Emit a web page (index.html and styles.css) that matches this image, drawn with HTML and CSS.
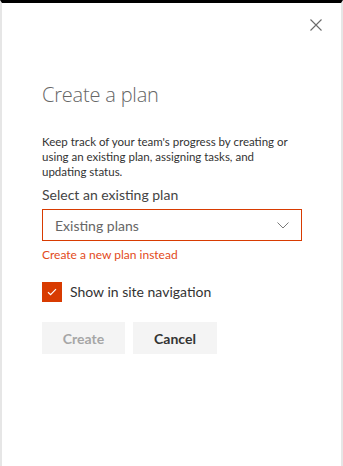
FILE: index.html
```html
<!DOCTYPE html>
<html>
<head>
<meta charset="utf-8">
<link rel="stylesheet" href="styles.css">
</head>
<body>
<div class="panel">
  <div class="topbar">
    <button class="close" aria-label="Close">
      <svg width="12" height="12" viewBox="0 0 12 12"><path d="M0.5 0.5 L11.5 11.5 M11.5 0.5 L0.5 11.5" stroke="#6b6b6b" stroke-width="1.1" fill="none"/></svg>
    </button>
  </div>
  <div class="content">
    <h1 class="title">Create a plan</h1>
    <p class="desc">Keep track of your team's progress by creating or using an existing plan, assigning tasks, and updating status.</p>
    <div class="label">Select an existing plan</div>
    <div class="dropdown">
      <span class="dd-text">Existing plans</span>
      <svg class="chev" width="12" height="7" viewBox="0 0 12 7"><path d="M0.5 0.5 L6 6 L11.5 0.5" stroke="#7a7a7a" stroke-width="1" fill="none"/></svg>
    </div>
    <a class="link">Create a new plan instead</a>
    <div class="check-row">
      <span class="checkbox">
        <svg width="10" height="8" viewBox="0 0 10 8"><path d="M1 4.2 L3.6 6.6 L9 1.2" stroke="#fff" stroke-width="1.2" fill="none"/></svg>
      </span>
      <span class="check-label">Show in site navigation</span>
    </div>
    <div class="buttons">
      <button class="btn disabled">Create</button>
      <button class="btn">Cancel</button>
    </div>
  </div>
</div>
</body>
</html>
```
FILE: styles.css
```css
html, body {
  margin: 0;
  padding: 0;
  background: #fff;
}
body {
  font-family: Lato, "Open Sans", sans-serif;
  color: #333;
}
.panel {
  box-sizing: border-box;
  height: 466px;
  border-top: 3px solid #000;
  border-left: 2px solid #e6e6e6;
  border-right: 2px solid #e6e6e6;
  background: #fff;
}
.topbar {
  display: flex;
  justify-content: flex-end;
  padding: 16px 19px 0 0;
}
.close {
  width: 12px;
  height: 12px;
  padding: 0;
  border: 0;
  background: none;
  display: flex;
}
.content {
  padding: 0 0 0 40px;
}
.title {
  margin: 50px 0 0 0;
  font-family: "Open Sans", sans-serif;
  font-size: 20px;
  font-weight: 300;
  line-height: 28px;
  color: #666;
  letter-spacing: -0.2px;
}
.desc {
  margin: 25px 0 0 0;
  width: 252px;
  font-size: 11.5px;
  line-height: 15px;
  color: #333;
}
.label {
  margin-top: 6px;
  font-size: 14px;
  line-height: 20px;
  color: #444;
}
.dropdown {
  box-sizing: border-box;
  margin-top: 4px;
  width: 260px;
  height: 32px;
  border: 1px solid #d83b01;
  display: flex;
  align-items: center;
  justify-content: space-between;
  padding: 0 12px 0 12px;
}
.dd-text {
  font-size: 14px;
  color: #666;
}
.link {
  display: block;
  margin-top: 6px;
  font-size: 12px;
  line-height: 16px;
  color: #e24a1a;
}
.check-row {
  display: flex;
  align-items: center;
  gap: 8px;
  margin-top: 19px;
}
.checkbox {
  width: 20px;
  height: 20px;
  background: #d83b01;
  display: flex;
  align-items: center;
  justify-content: center;
}
.check-label {
  font-size: 14px;
  line-height: 20px;
  color: #333;
}
.buttons {
  display: flex;
  gap: 8px;
  margin-top: 20px;
}
.btn {
  width: 83px;
  height: 32px;
  border: 0;
  background: #f4f4f4;
  font-family: inherit;
  font-size: 14px;
  font-weight: 700;
  color: #333;
  padding: 0;
}
.btn + .btn { width: 84px; }
.btn.disabled {
  color: #a6a6a6;
}
```
